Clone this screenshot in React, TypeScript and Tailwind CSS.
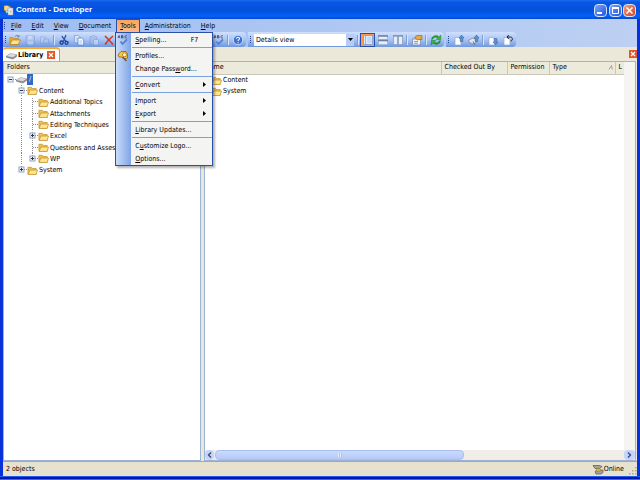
import React from 'react'

type Art = { className?: string }

const svg = (size: string, children: React.ReactNode) => (
  <svg viewBox="0 0 12 12" className={`${size} shrink-0`} fill="none" aria-hidden="true">
    {children}
  </svg>
)

const AppIcon = () => svg('w-3 h-3', <>
  <path d="M1 1.500h4l1 1h1.500v4H1z" fill="#f7dc86" stroke="#8b6a1c" strokeWidth=".6" />
  <path d="M5 4h5v7H5z" fill="#f5f8ff" stroke="#7c93bb" strokeWidth=".6" />
  <path d="M2 6l4 1-2.500 2.500z" fill="#b9d2f8" />
  <path d="M6.500 6h2.300M6.500 7.500h2.300M6.500 9h2.300" stroke="#d8a13a" strokeWidth=".7" />
</>)

const FolderOpen = () => svg('w-3 h-3', <>
  <path d="M1 10.500V3.500h3l1 1h4.500v6z" fill="#e8a92b" stroke="#b98422" strokeWidth=".6" />
  <path d="M1 10.500L3.200 6h8.300l-2.300 4.500z" fill="#ffe38a" stroke="#a5741a" strokeWidth=".6" />
  <path d="M6 2.500c1.500-1.500 3-1.200 3.800 0M10 1.200v1.600H8.500" stroke="#4c6fae" strokeWidth=".8" />
</>)

const Save = () => svg('w-3 h-3 opacity-50', <>
  <path d="M2 2h8.500v8.500H2z" fill="#a9c0e8" stroke="#7394cb" />
  <path d="M4 2h4.500v3.500H4zM4 7.500h5v3H4z" fill="#dbe7fa" />
</>)

const Publish = () => svg('w-3 h-3 opacity-50', <>
  <path d="M1.500 3h5v6h-5z" fill="#c9d9f3" stroke="#7394cb" strokeWidth=".8" />
  <path d="M4.500 5h5v4h-5z" fill="#b9ccec" stroke="#7394cb" strokeWidth=".8" />
  <path d="M9 8l2 2.500" stroke="#7394cb" />
</>)

const Cut = () => svg('w-3 h-3', <>
  <path d="M8 1L5.300 7.500M3.800 2.200L8 7.500" stroke="#2c55a8" strokeWidth="1.300" />
  <circle cx="3.600" cy="8.600" r="1.600" stroke="#173f92" strokeWidth="1.300" />
  <circle cx="8.600" cy="8.800" r="1.500" stroke="#173f92" strokeWidth="1.300" />
</>)

const Copy = () => svg('w-3 h-3', <>
  <path d="M1.500 1.500h3.700l1.800 1.800v5H1.500z" fill="#e6effe" stroke="#7d9cd6" strokeWidth=".8" />
  <path d="M5 4h3.700l2 2v5H5z" fill="#fff" stroke="#5b7fc4" strokeWidth=".8" />
  <path d="M6.300 7h3M6.300 9h3M2.700 4h2M2.700 6h2" stroke="#7fa1dd" strokeWidth=".7" />
</>)

const Paste = () => svg('w-3 h-3 opacity-50', <>
  <path d="M2 2.500h6.500v8H2z" fill="#a5bce4" stroke="#6e8dc4" strokeWidth=".8" />
  <path d="M4 1.500h2.500v2H4zM5.500 5.500h5V11h-5z" fill="#dde8fa" stroke="#7394cb" strokeWidth=".8" />
</>)

const Delete = () => svg('w-3 h-3', (
  <path d="M2 2c2 2 5.500 5.500 8 8.500M10 2C7.500 4 4 7.500 2.200 10.500" stroke="#d3361b" strokeWidth="1.600" />
))

const Spell = () => svg('w-3 h-3', <>
  <path d="M1 4l1-2.500L3 4M1.300 3.300h1.400M4.500 1.500h1.200l.5.600-.5.600H4.500h1.300l.6.600-.5.700H4.500zM10 2c-.7-.8-2-.6-2 .8s1.300 1.500 2 .7" stroke="#333c55" strokeWidth=".7" />
  <path d="M3.500 7.500L5.500 10 10 5.300" stroke="#4f7fd4" strokeWidth="1.700" />
</>)

const HelpIcon = () => svg('w-3 h-3', <>
  <circle cx="6" cy="6" r="4.700" fill="#3b72d6" stroke="#dbe8ff" strokeWidth=".8" />
  <path d="M4.500 4.800c0-2.200 3.200-2 3.100-.2 0 1-1.500 1.100-1.500 2.300M6.100 8.200v1" stroke="#fff" strokeWidth="1.100" />
</>)

const Pane = ({ split }: { split: 'left' | 'rows' | 'cols' }) => svg('w-3 h-3', <>
  {split === 'left' && <>
    <rect x="1.500" y="1.500" width="9" height="9" fill="#dbe8fd" stroke="#8fa6cf" />
    <path d="M3.500 2v8" stroke="#9bb8ea" />
    <path d="M5.500 4h4M5.500 6h4M5.500 8h4" stroke="#a9c1ec" strokeWidth=".8" />
  </>}
  {split === 'rows' && <>
    <path d="M1.500 1.500h9v4h-9zM1.500 6.500h9v4h-9z" fill="#e4edfc" stroke="#a3b4d2" strokeWidth=".8" />
    <path d="M1 2h10M1 6.500h10" stroke="#6d7d9c" strokeWidth="1.300" />
  </>}
  {split === 'cols' && <>
    <path d="M1.500 1.500h4v9h-4zM6.500 1.500h4v9h-4z" fill="#e4edfc" stroke="#8e9dba" strokeWidth=".8" />
    <path d="M1 2h4.700M6.300 2H11" stroke="#6d7d9c" strokeWidth="1.200" />
  </>}
</>)

const Properties = () => svg('w-3 h-3', <>
  <path d="M1.500 5h8v6h-8z" fill="#f0f3fa" stroke="#7a89a8" strokeWidth=".8" />
  <path d="M3 7.500h4M3 9.300h4" stroke="#6d86b8" strokeWidth=".8" />
  <path d="M3.500 3.500L6 1.500h5v4H8L6.500 6z" fill="#e9a73b" stroke="#8d5e1c" strokeWidth=".6" />
</>)

const Refresh = () => svg('w-3 h-3', <>
  <path d="M2 5.500C2.300 2.500 6 1.500 8.300 3.300M10 6.500c-.3 3-4 4-6.300 2.200" stroke="#189a24" strokeWidth="2" />
  <path d="M10.800 1v4.500H6.300zM1.200 11V6.500h4.500z" fill="#35b83a" stroke="#0d7418" strokeWidth=".4" />
</>)

const Doc = ({ kind }: { kind: 'in' | 'inAll' | 'out' | 'undo' }) => svg('w-3 h-3', <>
  {kind !== 'inAll' && <path d="M2 3.500h3.500l2.500 2V11H2z" fill="#fbfcff" stroke="#9aa6bd" strokeWidth=".7" />}
  {kind === 'inAll' && <>
    <path d="M.8 6L5 4l3 1.500v3L5 10 .8 8z" fill="#dfe4ee" stroke="#75839d" strokeWidth=".7" />
    <path d="M5 7.500l2 3.500" stroke="#60708f" />
  </>}
  {(kind === 'in' || kind === 'inAll') && <path d="M8.500 1L11 4H9.800v3.500H7.200V4H6z" fill="#5c91cf" stroke="#2d5c9e" strokeWidth=".5" />}
  {kind === 'out' && <path d="M8.500 11L11 8H9.800V4.500H7.200V8H6z" fill="#5c91cf" stroke="#2d5c9e" strokeWidth=".5" />}
  {kind === 'undo' && <path d="M5 3h3.500c2.500 0 2.500 4 0 4M6.700 1L5 3l1.700 2" stroke="#222" />}
</>)

const Profiles = () => svg('w-3 h-3', <>
  <path d="M1 5l3-3.500h5L10.500 4v4L7 9 5 7H2z" fill="#ffc83a" stroke="#9a5e12" strokeWidth=".8" />
  <circle cx="7.500" cy="4.800" r="2" fill="#fff5d0" stroke="#9a5e12" strokeWidth=".7" />
  <path d="M5.500 7l4 4" stroke="#7b5a2a" strokeWidth="1.600" />
</>)

const Drive = () => svg('w-[11px] h-[11px]', <>
  <path d="M.5 6.500L5 4l6.500 1.200v2L7.500 9.800.5 8z" fill="#8f8f8f" stroke="#5d5d5d" strokeWidth=".5" />
  <path d="M.5 6.500L5 4l6.500 1.200L7.500 8z" fill="#dcdcdc" />
</>)

const Folder = () => svg('w-[11px] h-[11px]', <>
  <path d="M1 10V2.500h3.800l1 1.300H10V10z" fill="#f2c14a" stroke="#b98a26" strokeWidth=".7" />
  <path d="M1.300 10.300L3 5.500h8.500L10 10.300z" fill="#ffe58c" stroke="#b5862a" strokeWidth=".7" />
</>)

const Online = () => svg('w-3 h-3', <>
  <path d="M1 2.500h6l3 1-2 2H3zM3 8.500L5 7h6v2.500L9 11H4z" fill="#a3a39a" stroke="#55554e" strokeWidth=".7" />
  <path d="M4.500 5.500h3.500v3H5z" fill="#f0b429" stroke="#8b6a1c" strokeWidth=".4" />
</>)

const Cross = ({ className }: Art) => (
  <svg viewBox="0 0 8 8" className={className} aria-hidden="true">
    <path d="M2 2l4 4M6 2L2 6" stroke="#fff" strokeWidth="1.200" />
  </svg>
)

// "&" marks the accelerator letter
function Label({ text }: { text: string }) {
  const i = text.indexOf('&')
  if (i < 0) return <>{text}</>
  return <>{text.slice(0, i)}<u>{text[i + 1]}</u>{text.slice(i + 2)}</>
}

type MenuEntry = { label: string; hint?: string; sub?: boolean; icon?: React.ReactNode }

const toolsMenu: MenuEntry[][] = [
  [{ label: '&Spelling...', hint: 'F7', icon: <Spell /> }],
  [{ label: '&Profiles...', icon: <Profiles /> }, { label: 'Change Pass&word...' }],
  [{ label: '&Convert', sub: true }],
  [{ label: '&Import', sub: true }, { label: '&Export', sub: true }],
  [{ label: '&Library Updates...' }],
  [{ label: 'C&ustomize Logo...' }, { label: '&Options...' }],
]

function ToolsMenu() {
  return (
    <div role="menu" className="absolute -left-px top-full z-10 w-[98px] border border-[#2a4fa8] bg-[linear-gradient(90deg,#c9dcfa_0px,#7fa4e6_15px,#f4f4f3_15px)] shadow-[2px_2px_2px_rgba(0,0,0,0.3)]">
      {toolsMenu.map((group, g) => (
        <div key={g} role="group">
          {g > 0 && <div className="ml-4 my-px h-px bg-[#7ba0e0]" />}
          {group.map((item) => (
            <button key={item.label} role="menuitem" className="flex h-[13px] w-full items-center pr-1 text-left">
              <span className="flex w-[19px] shrink-0 pl-px">{item.icon}</span>
              <span className="flex-1 whitespace-nowrap"><Label text={item.label} /></span>
              {item.hint && <span className="pr-2.5">{item.hint}</span>}
              {item.sub && (
                <svg viewBox="0 0 3 5" className="mr-0.5 h-[5px] w-[3px]" aria-hidden="true"><path d="M0 0l3 2.500L0 5z" /></svg>
              )}
            </button>
          ))}
        </div>
      ))}
    </div>
  )
}

const menus = ['&File', '&Edit', '&View', '&Document', '&Tools', '&Administration', '&Help']

function MenuBar() {
  return (
    <nav className="flex h-[13px] items-stretch bg-gradient-to-r from-[#9fbdf1] to-[#bdd0f3]">
      <Grip />
      {menus.map((m) => m === '&Tools' ? (
        <div key={m} className="relative flex">
          <button className="border border-b-0 border-[#2a4fa8] bg-gradient-to-b from-[#fba45c] to-[#fcb98a] px-[3px]" aria-expanded="true">
            <Label text={m} />
          </button>
          <ToolsMenu />
        </div>
      ) : (
        <button key={m} className="px-[5px]"><Label text={m} /></button>
      ))}
    </nav>
  )
}

const Grip = () => (
  <span className="my-auto h-2 w-px mx-px shrink-0 bg-[repeating-linear-gradient(180deg,#27478c_0px,#27478c_1px,transparent_1px,transparent_2px)]" />
)
const Sep = () => <span className="mx-px h-2.5 w-0.5 shrink-0 border-r border-[#d6e4fc] bg-[#7f9ed6]" />

function Tool({ name, active, children }: { name: string; active?: boolean; children: React.ReactNode }) {
  return (
    <button
      aria-label={name}
      className={`flex h-[14px] w-[15px] shrink-0 items-center justify-center ${active ? 'border border-[#2a4fa8] bg-[#f99b4b]' : ''}`}
    >
      {children}
    </button>
  )
}

function Band({ className, children }: { className?: string; children: React.ReactNode }) {
  return (
    <div className={`flex items-center rounded-r-sm bg-gradient-to-b from-[#cfe0fc] via-[#a9c5f5] to-[#6f97dd] px-px ${className ?? ''}`}>
      <Grip />
      {children}
    </div>
  )
}

function ToolBar() {
  return (
    <div className="flex h-[15px] gap-0.5 bg-gradient-to-r from-[#9fbdf1] to-[#bdd0f3]">
      <Band className="w-[243px]">
        <Tool name="Open"><FolderOpen /></Tool>
        <Tool name="Save"><Save /></Tool>
        <Tool name="Publish"><Publish /></Tool>
        <Sep />
        <Tool name="Cut"><Cut /></Tool>
        <Tool name="Copy"><Copy /></Tool>
        <Tool name="Paste"><Paste /></Tool>
        <Tool name="Delete"><Delete /></Tool>
        <span className="flex-1" />
        <Tool name="Spelling"><Spell /></Tool>
        <Sep />
        <Tool name="Help"><HelpIcon /></Tool>
      </Band>
      <Band>
        <div className="relative mx-0.5 flex h-3 w-[100px] bg-white">
          <select aria-label="View" className="w-full appearance-none bg-white pl-0.5 leading-3">
            <option>Details view</option>
          </select>
          <span className="pointer-events-none absolute inset-y-0 right-0 flex w-2 items-center justify-center bg-[#b4cdf7]">
            <svg viewBox="0 0 5 3" className="h-[3px] w-[5px]" aria-hidden="true"><path d="M0 0h5L2.500 3z" /></svg>
          </span>
        </div>
        <Sep />
        <Tool name="Folder pane" active><Pane split="left" /></Tool>
        <Tool name="Split horizontally"><Pane split="rows" /></Tool>
        <Tool name="Split vertically"><Pane split="cols" /></Tool>
        <Sep />
        <Tool name="Properties"><Properties /></Tool>
        <Sep />
        <Tool name="Refresh"><Refresh /></Tool>
      </Band>
      <Band>
        <span className="w-px" />
        <Tool name="Check in"><Doc kind="in" /></Tool>
        <Tool name="Check in all"><Doc kind="inAll" /></Tool>
        <Sep />
        <Tool name="Check out"><Doc kind="out" /></Tool>
        <Tool name="Undo check out"><Doc kind="undo" /></Tool>
      </Band>
    </div>
  )
}

type Cell = 'plus' | 'minus' | 'tee' | 'line' | 'none'
type Node = { label: string; cells: Cell[]; root?: boolean; last?: boolean }

const tree: Node[] = [
  { label: '/', cells: ['minus'], root: true, last: true },
  { label: 'Content', cells: ['none', 'minus'] },
  { label: 'Additional Topics', cells: ['none', 'line', 'tee'] },
  { label: 'Attachments', cells: ['none', 'line', 'tee'] },
  { label: 'Editing Techniques', cells: ['none', 'line', 'tee'] },
  { label: 'Excel', cells: ['none', 'line', 'plus'] },
  { label: 'Questions and Assess', cells: ['none', 'line', 'tee'] },
  { label: 'WP', cells: ['none', 'line', 'plus'], last: true },
  { label: 'System', cells: ['none', 'plus'], last: true },
]

function TreeCell({ kind, last, root }: { kind: Cell; last?: boolean; root?: boolean }) {
  const box = kind === 'plus' || kind === 'minus'
  return (
    <svg viewBox="0 0 11 12" className="h-3 w-[11px] shrink-0" fill="none" aria-hidden="true">
      {kind !== 'none' && !root && <path d={last && kind !== 'line' ? 'M5.500 0v6' : 'M5.500 0v12'} stroke="#8c8c8c" strokeDasharray="1 1" />}
      {(box || kind === 'tee') && <path d="M6 5.500h5" stroke="#8c8c8c" strokeDasharray="1 1" />}
      {box && <rect x="3" y="3" width="5" height="5" fill="#f2f4f8" stroke="#8fa5c6" />}
      {box && <path d={kind === 'plus' ? 'M4 5.500h3M5.500 4v3' : 'M4 5.500h3'} stroke="#333" />}
    </svg>
  )
}

function FolderTree() {
  return (
    <section className="flex w-[198px] shrink-0 flex-col border border-[#9db4d6] bg-white">
      <h2 className="h-3 border-b border-[#cbc7b8] bg-[#ebeadb] pl-[3px] leading-[11px]">Folders</h2>
      <ul className="grid h-[102px] auto-rows-fr pl-px" role="tree">
        {tree.map((n) => (
          <li key={n.label} role="treeitem" className="flex items-center overflow-hidden whitespace-nowrap">
            {n.cells.map((c, i) => <TreeCell key={i} kind={c} last={n.last} root={n.root} />)}
            {n.root ? <Drive /> : <Folder />}
            {n.root
              ? <span className="w-1.5 self-stretch bg-[#316ac5] text-center text-white">/</span>
              : <span className="pl-px">{n.label}</span>}
          </li>
        ))}
      </ul>
    </section>
  )
}

const head = 'border-l border-[#cbc7b8] pl-[3px] text-left font-normal overflow-hidden whitespace-nowrap'

function FileList() {
  return (
    <section className="flex min-w-0 flex-1 flex-col border border-[#9db4d6] bg-white">
      <div className="flex min-h-0 flex-1">
        <div className="min-w-0 flex-1">
          <table className="w-full table-fixed border-collapse">
            <colgroup>
              <col />
              <col className="w-[66px]" />
              <col className="w-[42px]" />
              <col className="w-[66px]" />
              <col className="w-[9px]" />
            </colgroup>
            <thead className="h-3 border-b border-[#cbc7b8] bg-[#ebeadb] leading-[11px]">
              <tr>
                <th className="p-0 text-left font-normal">Name</th>
                <th className={head}>Checked Out By</th>
                <th className={head}>Permission</th>
                <th className={head}>
                  <span className="flex items-center justify-between pr-0.5">
                    Type
                    <svg viewBox="0 0 5 5" className="h-[5px] w-[5px]" fill="none" aria-hidden="true"><path d="M1 4.500L3.500.5l.8 4" stroke="#a5a294" /></svg>
                  </span>
                </th>
                <th className={head}>L</th>
              </tr>
            </thead>
            <tbody>
              {['Content', 'System'].map((name) => (
                <tr key={name} className="h-[11px] leading-[11px]">
                  <td className="p-0 pl-[6px]" colSpan={5}>
                    <span className="flex items-center gap-px"><Folder />{name}</span>
                  </td>
                </tr>
              ))}
            </tbody>
          </table>
        </div>
        <div className="w-[11px] bg-[#f6f4f0]" />
      </div>
      <div className="flex h-2.5 items-stretch bg-[#f1eeea]">
        <button aria-label="Scroll left" className="flex w-[9px] items-center justify-center rounded-sm bg-[#c4d4fa]">
          <svg viewBox="0 0 5 6" className="h-1.5 w-[5px]" fill="none" aria-hidden="true"><path d="M4 .5L1.500 3 4 5.500" stroke="#3a4a70" strokeWidth="1.300" /></svg>
        </button>
        <div className="flex flex-1 pl-px">
          <div className="flex w-[61%] items-center justify-center rounded-sm border border-[#a9bff0] bg-gradient-to-b from-[#cbdafd] to-[#b5c9f8]">
            <span className="h-1 w-1 bg-[repeating-linear-gradient(90deg,#e6eefe_0px,#e6eefe_1px,#a9c2f3_1px,#a9c2f3_2px)]" />
          </div>
        </div>
        <button aria-label="Scroll right" className="flex w-[11px] items-center justify-center rounded-sm bg-[#c4d4fa]">
          <svg viewBox="0 0 5 6" className="h-1.5 w-[5px]" fill="none" aria-hidden="true"><path d="M1 .5L3.500 3 1 5.500" stroke="#3a4a70" strokeWidth="1.300" /></svg>
        </button>
      </div>
    </section>
  )
}

const caption = 'flex h-[13px] w-[13px] items-center justify-center rounded-sm border border-[#d5e3fc]'

function TitleBar() {
  return (
    <header className="flex h-[19px] shrink-0 items-center gap-px bg-[linear-gradient(180deg,#1a6cf0_0%,#0a57e6_12%,#0350dc_55%,#0561f8_85%,#0448cf_100%)] pr-1 pl-[3px] pt-px">
      <AppIcon />
      <h1 className="flex-1 font-['Liberation_Sans',sans-serif] text-[8px] leading-[10px] font-bold text-white">Content - Developer</h1>
      <button aria-label="Minimize" className={`${caption} bg-gradient-to-br from-[#7da2f7] to-[#1f4fdd] mr-px`}>
        <svg viewBox="0 0 11 11" className="h-[11px] w-[11px]" aria-hidden="true"><path d="M2 7h5v2H2z" fill="#fff" /></svg>
      </button>
      <button aria-label="Restore" className={`${caption} bg-gradient-to-br from-[#7da2f7] to-[#1f4fdd]`}>
        <svg viewBox="0 0 11 11" className="h-[11px] w-[11px]" fill="none" aria-hidden="true"><path d="M2.500 3v5.500h6V3" stroke="#fff" /><path d="M2 2h7v2H2z" fill="#fff" /></svg>
      </button>
      <button aria-label="Close" className={`${caption} bg-gradient-to-br from-[#f0997c] to-[#d3401a]`}>
        <svg viewBox="0 0 11 11" className="h-[11px] w-[11px]" aria-hidden="true"><path d="M2.500 2.500l6 6M8.500 2.500l-6 6" stroke="#fff" strokeWidth="1.500" /></svg>
      </button>
    </header>
  )
}

export default function App() {
  return (
    <div className="flex h-screen flex-col overflow-hidden bg-[#0831d9] font-['DejaVu_Sans_Condensed','DejaVu_Sans',sans-serif] text-[7px] leading-[10px] text-black">
      <TitleBar />
      <div className="mx-[3px] flex min-h-0 flex-1 flex-col bg-[#ebe8d9]">
        <MenuBar />
        <ToolBar />
        <div className="flex h-[14px] shrink-0 items-center justify-between">
          <div className="flex h-full items-center rounded-t-sm border-t-2 border-r border-t-[#f6a92c] border-r-[#91a7b4] bg-[#fcfcfb] pl-[3px] pr-1">
            <Drive />
            <span className="pl-px font-bold">Library</span>
            <button aria-label="Close tab" className="ml-1 bg-[#e2562d]"><Cross className="h-2 w-2" /></button>
          </div>
          <button aria-label="Close view" className="bg-[#e2562d]"><Cross className="h-2 w-2" /></button>
        </div>
        <main className="flex min-h-0 flex-1 gap-[3px] pr-px">
          <FolderTree />
          <FileList />
        </main>
        <footer className="flex h-[15px] shrink-0 items-center border-t border-[#aaa89a] bg-[#e6e2cf] pl-[3px]">
          <span className="flex-1">2 objects</span>
          <Online />
          <span>Online</span>
          <svg viewBox="0 0 8 8" className="ml-[5px] mt-1 h-2 w-2" fill="#aaa797" aria-hidden="true">
            <path d="M6 0h1.500v1.500H6zM3 3h1.500v1.500H3zM6 3h1.500v1.500H6zM0 6h1.500v1.500H0zM3 6h1.500v1.500H3zM6 6h1.500v1.500H6z" />
          </svg>
        </footer>
      </div>
      <div className="h-1 shrink-0 border-t border-b border-t-[#1c5cf0] border-b-[#3a6fd0] bg-[#0018a8]" />
    </div>
  )
}
